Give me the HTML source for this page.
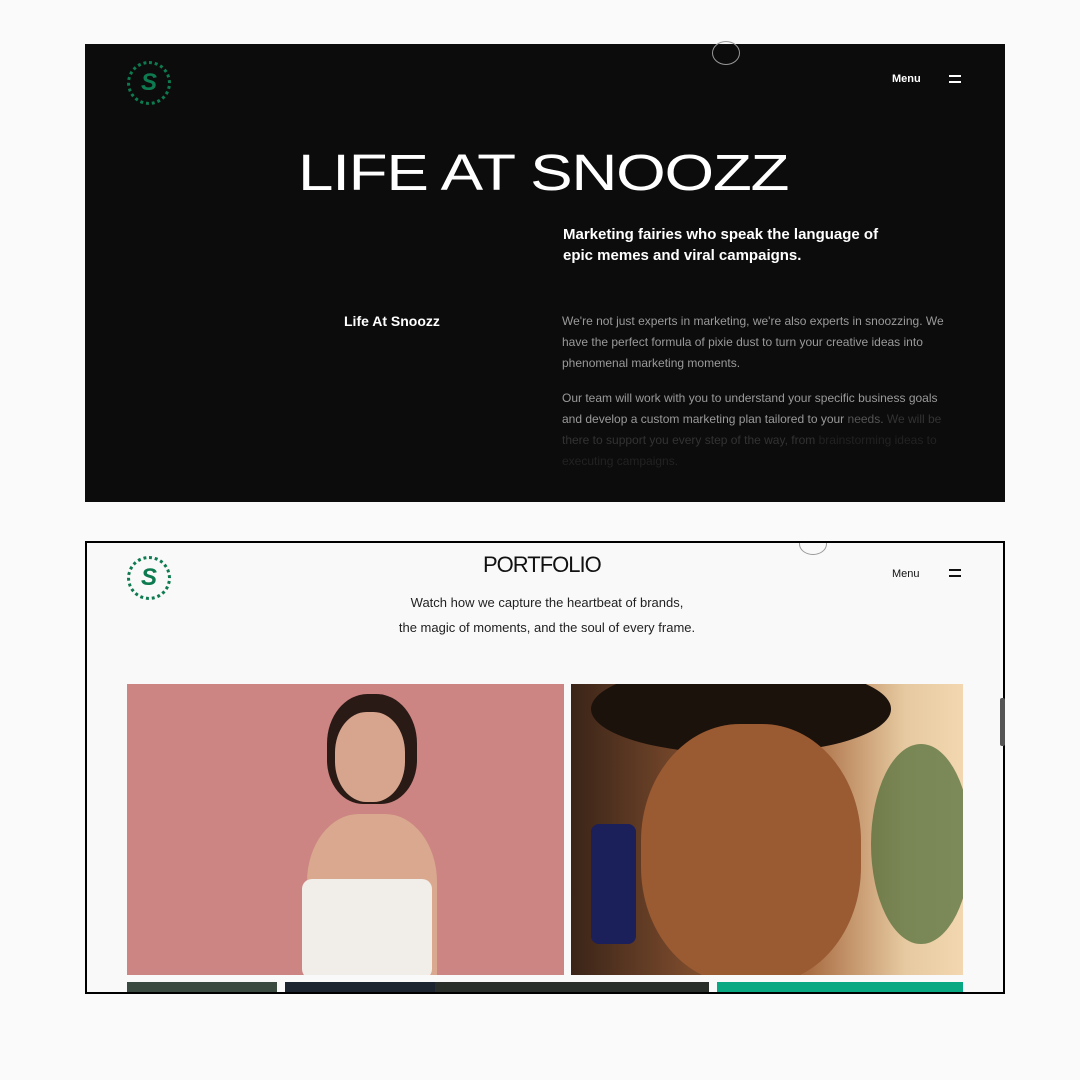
<!DOCTYPE html>
<html><head><style>
*{margin:0;padding:0;box-sizing:border-box}
body{width:1080px;height:1080px;background:#fafafa;position:relative;overflow:hidden;font-family:"Liberation Sans",sans-serif}
.a{position:absolute}
.top{left:85px;top:44px;width:920px;height:458px;background:#0c0c0c}
.bot{left:85px;top:541px;width:920px;height:453px;background:#f9f9f9;border:2px solid #000;overflow:hidden}
.logo{width:44px;height:44px;border-radius:50%;border:3px dotted #0e7a4f;display:flex;align-items:center;justify-content:center;color:#0e7a4f;font-weight:900;font-size:24px;font-style:italic}
.p{color:#9a9a9a;font-size:12px;line-height:21px}
</style></head><body>
<div class="a top">
  <div class="a logo" style="left:42px;top:17px">S</div>
  <div class="a" style="left:807px;top:29px;color:#fff;font-size:11px;font-weight:bold">Menu</div>
  <div class="a" style="left:864px;top:31px;width:12px;height:1.5px;background:#fff"></div>
  <div class="a" style="left:864px;top:37px;width:12px;height:1.5px;background:#fff"></div>
  <div class="a" style="left:627px;top:-3px;width:28px;height:24px;border:1px solid #999;border-radius:50%"></div>
  <div class="a" style="left:213px;top:103px;color:#fff;font-size:51px;letter-spacing:-1px;line-height:1;white-space:nowrap;transform:scaleX(1.25);transform-origin:left top">LIFE AT SNOOZZ</div>
  <div class="a" style="left:478px;top:180px;color:#fff;font-size:15px;font-weight:bold;line-height:21px;width:340px">Marketing fairies who speak the language of epic memes and viral campaigns.</div>
  <div class="a" style="left:259px;top:269px;color:#fff;font-size:14px;font-weight:bold">Life At Snoozz</div>
  <div class="a p" style="left:477px;top:267px;width:392px">We're not just experts in marketing, we're also experts in snoozzing. We have the perfect formula of pixie dust to turn your creative ideas into phenomenal marketing moments.</div>
  <div class="a p" style="left:477px;top:344px;width:392px"><span>Our team will work with you to understand your specific business goals and develop a custom marketing plan tailored to your</span> <span style="color:#555">needs.</span> <span style="color:#333">We will be there to support you every step of the way, from</span> <span style="color:#222">brainstorming ideas to executing campaigns.</span></div>
</div>
<div class="a bot">
  <div class="a logo" style="left:40px;top:13px">S</div>
  <div class="a" style="left:396px;top:9px;font-size:22px;letter-spacing:-1px;color:#111">PORTFOLIO</div>
  <div class="a" style="left:712px;top:-10px;width:28px;height:22px;border:1px solid #999;border-radius:50%"></div>
  <div class="a" style="left:805px;top:25px;font-size:11px;color:#111">Menu</div>
  <div class="a" style="left:862px;top:26px;width:12px;height:1.5px;background:#111"></div>
  <div class="a" style="left:862px;top:32px;width:12px;height:1.5px;background:#111"></div>
  <div class="a" style="left:240px;top:47px;width:440px;text-align:center;font-size:13px;line-height:25px;color:#222">Watch how we capture the heartbeat of brands,<br>the magic of moments, and the soul of every frame.</div>
  <div class="a" style="left:40px;top:141px;width:437px;height:291px;background:#cc8583;overflow:hidden">
    <div class="a" style="left:200px;top:10px;width:90px;height:110px;border-radius:45% 45% 40% 40%;background:#2a1a16"></div>
    <div class="a" style="left:208px;top:28px;width:70px;height:90px;border-radius:45%;background:#d7a58d"></div>
    <div class="a" style="left:180px;top:130px;width:130px;height:170px;border-radius:40% 40% 0 0;background:#d9a88e"></div>
    <div class="a" style="left:175px;top:195px;width:130px;height:100px;background:#f1ede8;border-radius:10px"></div>
  </div>
  <div class="a" style="left:484px;top:141px;width:392px;height:291px;background:linear-gradient(90deg,#3a2418,#7a4a2c 30%,#a86a40 60%,#e6c9a0 85%,#f2d7b0);overflow:hidden">
    <div class="a" style="left:20px;top:-20px;width:300px;height:90px;border-radius:50%;background:#1c120c"></div>
    <div class="a" style="left:70px;top:40px;width:220px;height:260px;border-radius:45%;background:#9a5a32"></div>
    <div class="a" style="left:300px;top:60px;width:100px;height:200px;border-radius:50%;background:#4a6a34;opacity:.7"></div>
    <div class="a" style="left:20px;top:140px;width:45px;height:120px;border-radius:8px;background:#1b1f5a"></div>
  </div>
  <div class="a" style="left:40px;top:439px;width:150px;height:12px;background:#3a4a40"></div>
  <div class="a" style="left:198px;top:439px;width:150px;height:12px;background:#1c2430"></div>
  <div class="a" style="left:348px;top:439px;width:274px;height:12px;background:#2a2e2a"></div>
  <div class="a" style="left:630px;top:439px;width:246px;height:12px;background:#0aa882"></div>
</div>
<div class="a" style="left:1000px;top:698px;width:5px;height:48px;background:#555;border-radius:2px"></div>
</body></html>
